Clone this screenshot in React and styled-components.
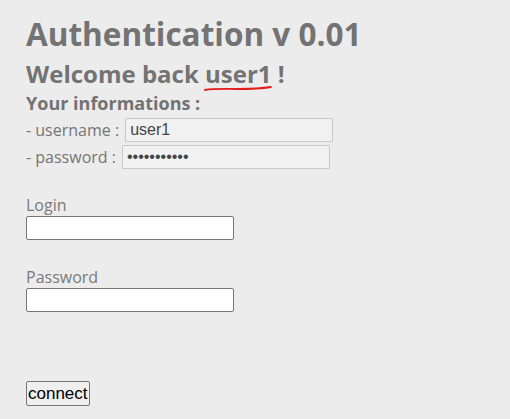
import React from "react";
import styled, { createGlobalStyle } from "styled-components";

const GlobalStyle = createGlobalStyle`
  html, body {
    margin: 0;
    padding: 0;
    background: #ececec;
  }
  body {
    font-family: "Open Sans", "Noto Sans", sans-serif;
    color: #757575;
  }
`;

const Page = styled.div`
  padding: 14px 26px 0 26px;
  min-height: 419px;
  box-sizing: border-box;
`;

const Title = styled.h1`
  margin: 0;
  font-size: 31.5px;
  font-weight: 700;
  line-height: 40px;
  color: #737373;
`;

const Welcome = styled.h2`
  margin: 4px 0 0;
  font-size: 24px;
  font-weight: 700;
  line-height: 32px;
  color: #737373;
`;

const Name = styled.span`
  position: relative;
  display: inline-block;
`;

const Squiggle = styled.svg`
  position: absolute;
  left: -1px;
  top: 28px;
  width: 68px;
  height: 5px;
  overflow: visible;
`;

const InfoTitle = styled.h3`
  margin: 1px 0 0;
  font-size: 18px;
  font-weight: 700;
  line-height: 24px;
  color: #737373;
`;

const InfoList = styled.div`
  margin-top: 1px;
`;

const InfoRow = styled.div`
  display: flex;
  align-items: center;
  gap: 6px;
  height: 27px;
  font-size: 16px;
`;

const InfoInput = styled.input`
  box-sizing: border-box;
  width: 208px;
  height: 24px;
  margin: 0;
  padding: 0 4px;
  border: 1px solid #c8c8c8;
  border-radius: 1px;
  background: #f1f1f1;
  font-family: "Liberation Sans", Arial, sans-serif;
  font-size: 16px;
  color: #444;
  outline: none;
`;

const Field = styled.div`
  display: flex;
  flex-direction: column;
  margin-top: ${({ $top }) => $top}px;
`;

const FieldLabel = styled.label`
  font-size: 16px;
  line-height: 20px;
  margin-bottom: 1px;
  color: #7a7a7a;
`;

const FieldInput = styled.input`
  box-sizing: border-box;
  width: 208px;
  height: 24px;
  margin: 0;
  border: 1px solid #767676;
  border-radius: 2px;
  background: #fff;
  outline: none;
`;

const Button = styled.button`
  display: block;
  margin-top: 69px;
  box-sizing: border-box;
  height: 25px;
  padding: 0 1px;
  border: 1px solid #767676;
  border-radius: 2px;
  background: #efefef;
  font-family: "Liberation Sans", Arial, sans-serif;
  font-size: 17px;
  color: #000;
`;

export default function App() {
  return (
    <>
      <GlobalStyle />
      <Page>
        <Title>Authentication v 0.01</Title>
        <Welcome>
          Welcome back{" "}
          <Name>
            user1
            <Squiggle viewBox="0 0 68 5">
              <path
                d="M1 4 C 10 2.4, 20 3, 34 3 S 58 2.4, 67 1"
                fill="none"
                stroke="#e21b1b"
                strokeWidth="1.8"
                strokeLinecap="round"
              />
            </Squiggle>
          </Name>{" "}
          !
        </Welcome>
        <InfoTitle>Your informations :</InfoTitle>
        <InfoList>
          <InfoRow>
            <span>- username :</span>
            <InfoInput readOnly value="user1" />
          </InfoRow>
          <InfoRow>
            <span>- password :</span>
            <InfoInput readOnly type="password" value="user1secret" />
          </InfoRow>
        </InfoList>
        <Field $top={25}>
          <FieldLabel htmlFor="login">Login</FieldLabel>
          <FieldInput id="login" />
        </Field>
        <Field $top={27}>
          <FieldLabel htmlFor="password">Password</FieldLabel>
          <FieldInput id="password" type="password" />
        </Field>
        <Button>connect</Button>
      </Page>
    </>
  );
}
